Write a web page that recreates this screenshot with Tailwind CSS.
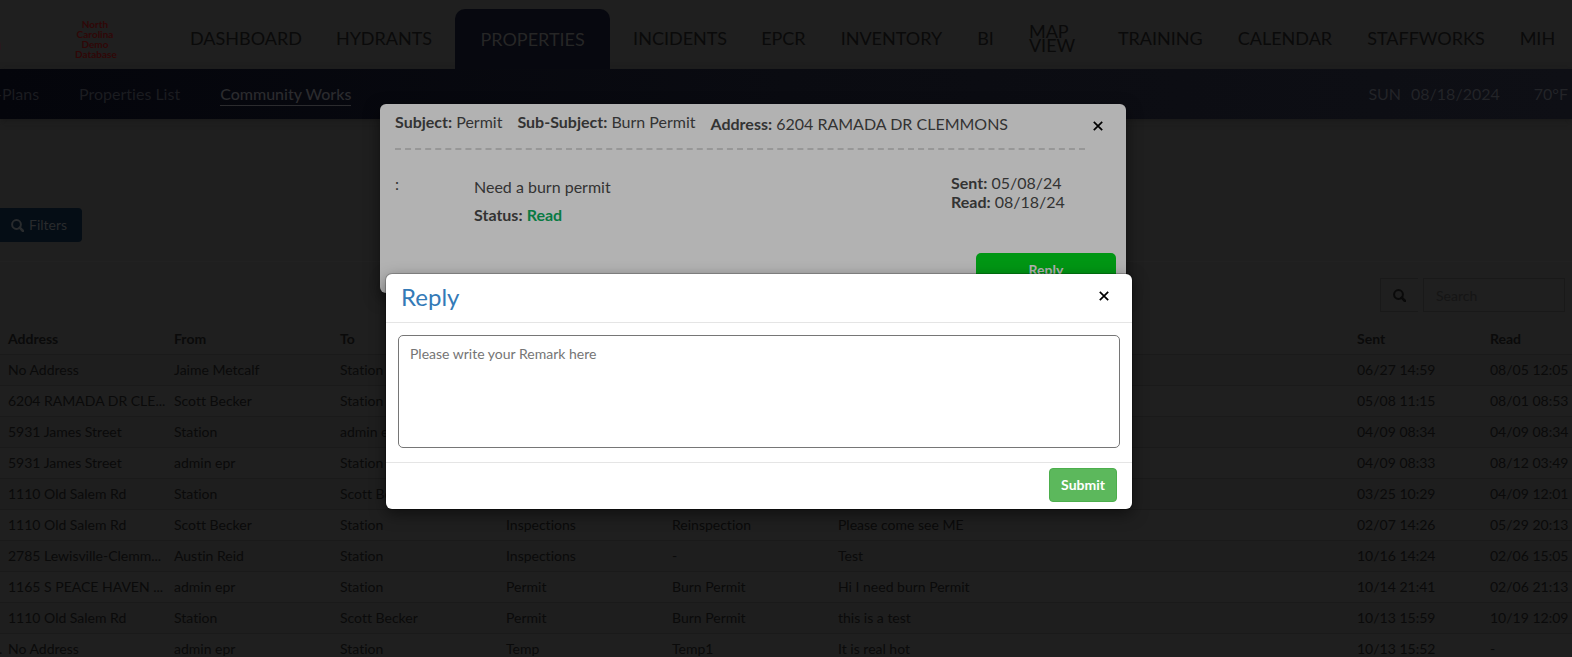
<!DOCTYPE html>
<html lang="en">
<head>
<meta charset="utf-8">
<title>Community Works</title>
<script src="https://cdn.jsdelivr.net/npm/@tailwindcss/browser@4"></script>
</head>
<body class="bg-[#1f1f1f] font-['Lato',sans-serif] text-[#0a0a0a] [font-variant-ligatures:none]">
<div class="relative h-screen overflow-hidden">
  <header class="flex h-[69px] whitespace-nowrap text-lg">
    <div class="flex w-[173px] shrink-0 items-center overflow-hidden text-[#300707]">
      <span class="-ml-2 w-[83px] pt-4 text-lg font-bold">a</span>
      <p class="mt-2 w-10 text-center text-[10px] leading-[10px] font-bold whitespace-normal">North Carolina Demo Database</p>
    </div>
    <nav class="flex items-center">
      <a href="#" class="px-[17px] pt-[6px]">DASHBOARD</a>
      <a href="#" class="px-[17px] pt-[6px]">HYDRANTS</a>
      <a href="#" class="mx-[6px] flex h-[60px] w-[155px] items-center justify-center self-end rounded-t-[10px] bg-[#07080f] text-[#262626]">PROPERTIES</a>
      <a href="#" class="px-[17px] pt-[6px]">INCIDENTS</a>
      <div class="flex items-center gap-px">
        <a href="#" class="px-[17px] pt-[6px]">EPCR</a>
        <a href="#" class="px-[17px] pt-[6px]">INVENTORY</a>
        <a href="#" class="px-[17px] pt-[6px]">BI</a>
        <a href="#" class="w-[88px] px-[17px] pt-[6px] leading-[14px] whitespace-normal">MAP VIEW</a>
        <a href="#" class="px-[17px] pt-[6px]">TRAINING</a>
        <a href="#" class="px-[17px] pt-[6px]">CALENDAR</a>
        <a href="#" class="px-[17px] pt-[6px]">STAFFWORKS</a>
        <a href="#" class="pt-[6px] pl-[17px]">MIH</a>
      </div>
    </nav>
  </header>

  <div class="flex h-[50px] items-center justify-between bg-linear-to-r from-[#04050b] via-[#0a0b11] to-[#0e0f15] pr-1 text-base whitespace-nowrap text-[#1b1c20] shadow-[0_2px_6px_#191919]">
    <nav class="flex items-center gap-10">
      <a href="#" class="-ml-1">-Plans</a>
      <a href="#">Properties List</a>
      <a href="#" class="border-b border-[#2b2b2e] leading-[22px] font-medium text-[#2b2b2e]">Community Works</a>
    </nav>
    <div class="flex text-[#232428]"><span class="mr-[10px]">SUN</span><span class="mr-[34px]">08/18/2024</span><span>70°F</span></div>
  </div>

  <main class="pt-[89px]">
    <div class="h-[54px] border-b border-[#212121]">
      <button type="button" class="-ml-1 flex h-[34px] w-[86px] items-center gap-[5px] rounded bg-[#050d15] pl-[15px] text-sm text-[#292b2d]">
        <svg class="size-[13px]" viewBox="0 0 13 13" fill="none" stroke="currentColor" stroke-width="2"><circle cx="5.5" cy="5.5" r="4.4"/><path d="M8.7 8.7 12 12" stroke-width="2.6" stroke-linecap="round"/></svg>
        Filters
      </button>
    </div>
    <div class="flex justify-end gap-[5px] pt-4 pr-[7px]">
      <button type="button" aria-label="Search" class="flex h-[34px] w-[38px] items-center justify-center border border-r-0 border-[#191919]">
        <svg class="size-[13px]" viewBox="0 0 13 13" fill="none" stroke="currentColor" stroke-width="2"><circle cx="5.5" cy="5.5" r="4.4"/><path d="M8.7 8.7 12 12" stroke-width="2.6" stroke-linecap="round"/></svg>
      </button>
      <input type="search" aria-label="Search messages" placeholder="Search" class="h-[34px] w-[142px] border border-[#191919] px-3 text-sm placeholder:text-[#151515]">
    </div>

    <table class="-ml-20 mt-3 w-[calc(100%_+_80px)] table-fixed text-left text-sm leading-5 whitespace-nowrap [&_td]:py-[5px] [&_td]:pl-2 [&_th]:py-[5px] [&_th]:pl-2 [&_th]:font-bold [&_tr]:border-b [&_tr]:border-[#1a1a1a] [&_tbody_tr:nth-child(odd)]:bg-[#1e1e1e]">
      <colgroup><col class="w-20"><col class="w-[166px]"><col class="w-[166px]"><col class="w-[166px]"><col class="w-[166px]"><col class="w-[166px]"><col><col class="w-[133px]"><col class="w-[90px]"></colgroup>
      <thead><tr><th></th><th>Address</th><th>From</th><th>To</th><th>Subject</th><th>Sub-Subject</th><th>Message</th><th>Sent</th><th>Read</th></tr></thead>
      <tbody>
        <tr><td></td><td>No Address</td><td>Jaime Metcalf</td><td>Station</td><td></td><td></td><td></td><td>06/27 14:59</td><td>08/05 12:05</td></tr>
        <tr><td></td><td>6204 RAMADA DR CLE...</td><td>Scott Becker</td><td>Station</td><td></td><td></td><td></td><td>05/08 11:15</td><td>08/01 08:53</td></tr>
        <tr><td></td><td>5931 James Street</td><td>Station</td><td>admin epr</td><td></td><td></td><td></td><td>04/09 08:34</td><td>04/09 08:34</td></tr>
        <tr><td></td><td>5931 James Street</td><td>admin epr</td><td>Station</td><td></td><td></td><td></td><td>04/09 08:33</td><td>08/12 03:49</td></tr>
        <tr><td></td><td>1110 Old Salem Rd</td><td>Station</td><td>Scott Becker</td><td></td><td></td><td></td><td>03/25 10:29</td><td>04/09 12:01</td></tr>
        <tr><td></td><td>1110 Old Salem Rd</td><td>Scott Becker</td><td>Station</td><td>Inspections</td><td>Reinspection</td><td>Please come see ME</td><td>02/07 14:26</td><td>05/29 20:13</td></tr>
        <tr><td></td><td>2785 Lewisville-Clemm...</td><td>Austin Reid</td><td>Station</td><td>Inspections</td><td>-</td><td>Test</td><td>10/16 14:24</td><td>02/06 15:05</td></tr>
        <tr><td></td><td>1165 S PEACE HAVEN ...</td><td>admin epr</td><td>Station</td><td>Permit</td><td>Burn Permit</td><td>Hi I need burn Permit</td><td>10/14 21:41</td><td>02/06 21:13</td></tr>
        <tr><td></td><td>1110 Old Salem Rd</td><td>Station</td><td>Scott Becker</td><td>Permit</td><td>Burn Permit</td><td>this is a test</td><td>10/13 15:59</td><td>10/19 12:09</td></tr>
        <tr><td class="pl-[79px]!">.</td><td>No Address</td><td>admin epr</td><td>Station</td><td>Temp</td><td>Temp1</td><td>It is real hot</td><td>10/13 15:52</td><td>-</td></tr>
      </tbody>
    </table>
  </main>

  <section role="dialog" aria-label="Message" class="absolute top-[104px] left-[380px] h-[189px] w-[746px] rounded-md bg-[#b2b2b2] px-[15px] text-base leading-[19px] text-[#333] shadow-[0_5px_15px_rgba(0,0,0,0.5)]">
    <div class="flex justify-between">
      <div class="flex h-[46px] w-[690px] gap-[15px] border-b-2 border-dashed border-[#979797] pt-2">
        <p><b>Subject:</b> Permit</p>
        <p><b>Sub-Subject:</b> Burn Permit</p>
        <p class="pt-[2px]"><b>Address:</b> 6204 RAMADA DR CLEMMONS</p>
      </div>
      <button type="button" aria-label="Close message" class="mt-[17px] mr-2 size-[10px] text-black"><svg viewBox="0 0 10 10" fill="none" stroke="currentColor" stroke-width="1.7"><path d="M.8.8 9.2 9.2M9.2.8.8 9.2"/></svg></button>
    </div>
    <div class="flex pt-[23px]">
      <p class="w-[79px] pt-px">:</p>
      <div class="grow space-y-[9px] pt-1"><p>Need a burn permit</p><p><b>Status:</b> <b class="text-[#097a43]">Read</b></p></div>
      <div class="w-[160px]"><p><b>Sent:</b> 05/08/24</p><p><b>Read:</b> 08/18/24</p></div>
    </div>
    <button type="button" class="mt-[29px] -mr-[5px] ml-auto block h-[34px] w-[140px] rounded-[5px] bg-[#009614] text-sm font-bold text-[#b2b2b2]">Reply</button>
  </section>

  <section role="dialog" aria-labelledby="reply-title" class="absolute top-[274px] left-[386px] w-[746px] rounded-md bg-white shadow-[0_5px_15px_rgba(0,0,0,0.5),0_0_0_1px_rgba(0,0,0,0.2)]">
    <div class="flex h-[49px] items-center justify-between border-b border-[#e5e5e5] px-[15px]">
      <h2 id="reply-title" class="pb-[2px] text-2xl text-[#337ab7]">Reply</h2>
      <button type="button" aria-label="Close reply" class="mr-2 mb-1 size-[10px] text-black"><svg viewBox="0 0 10 10" fill="none" stroke="currentColor" stroke-width="1.7"><path d="M.8.8 9.2 9.2M9.2.8.8 9.2"/></svg></button>
    </div>
    <div class="px-3 pt-3 pb-[14px]">
      <textarea aria-label="Remark" placeholder="Please write your Remark here" class="block h-[113px] w-full resize-none rounded-[5px] border border-[#767676] px-[11px] py-2 text-sm placeholder:text-[#757575]"></textarea>
    </div>
    <div class="flex h-[47px] justify-end border-t border-[#e5e5e5] px-[15px] pt-[5px]">
      <button type="button" class="h-[34px] rounded border border-[#4cae4c] bg-[#5cb85c] px-[11px] text-sm font-bold text-white">Submit</button>
    </div>
  </section>
</div>
</body>
</html>
